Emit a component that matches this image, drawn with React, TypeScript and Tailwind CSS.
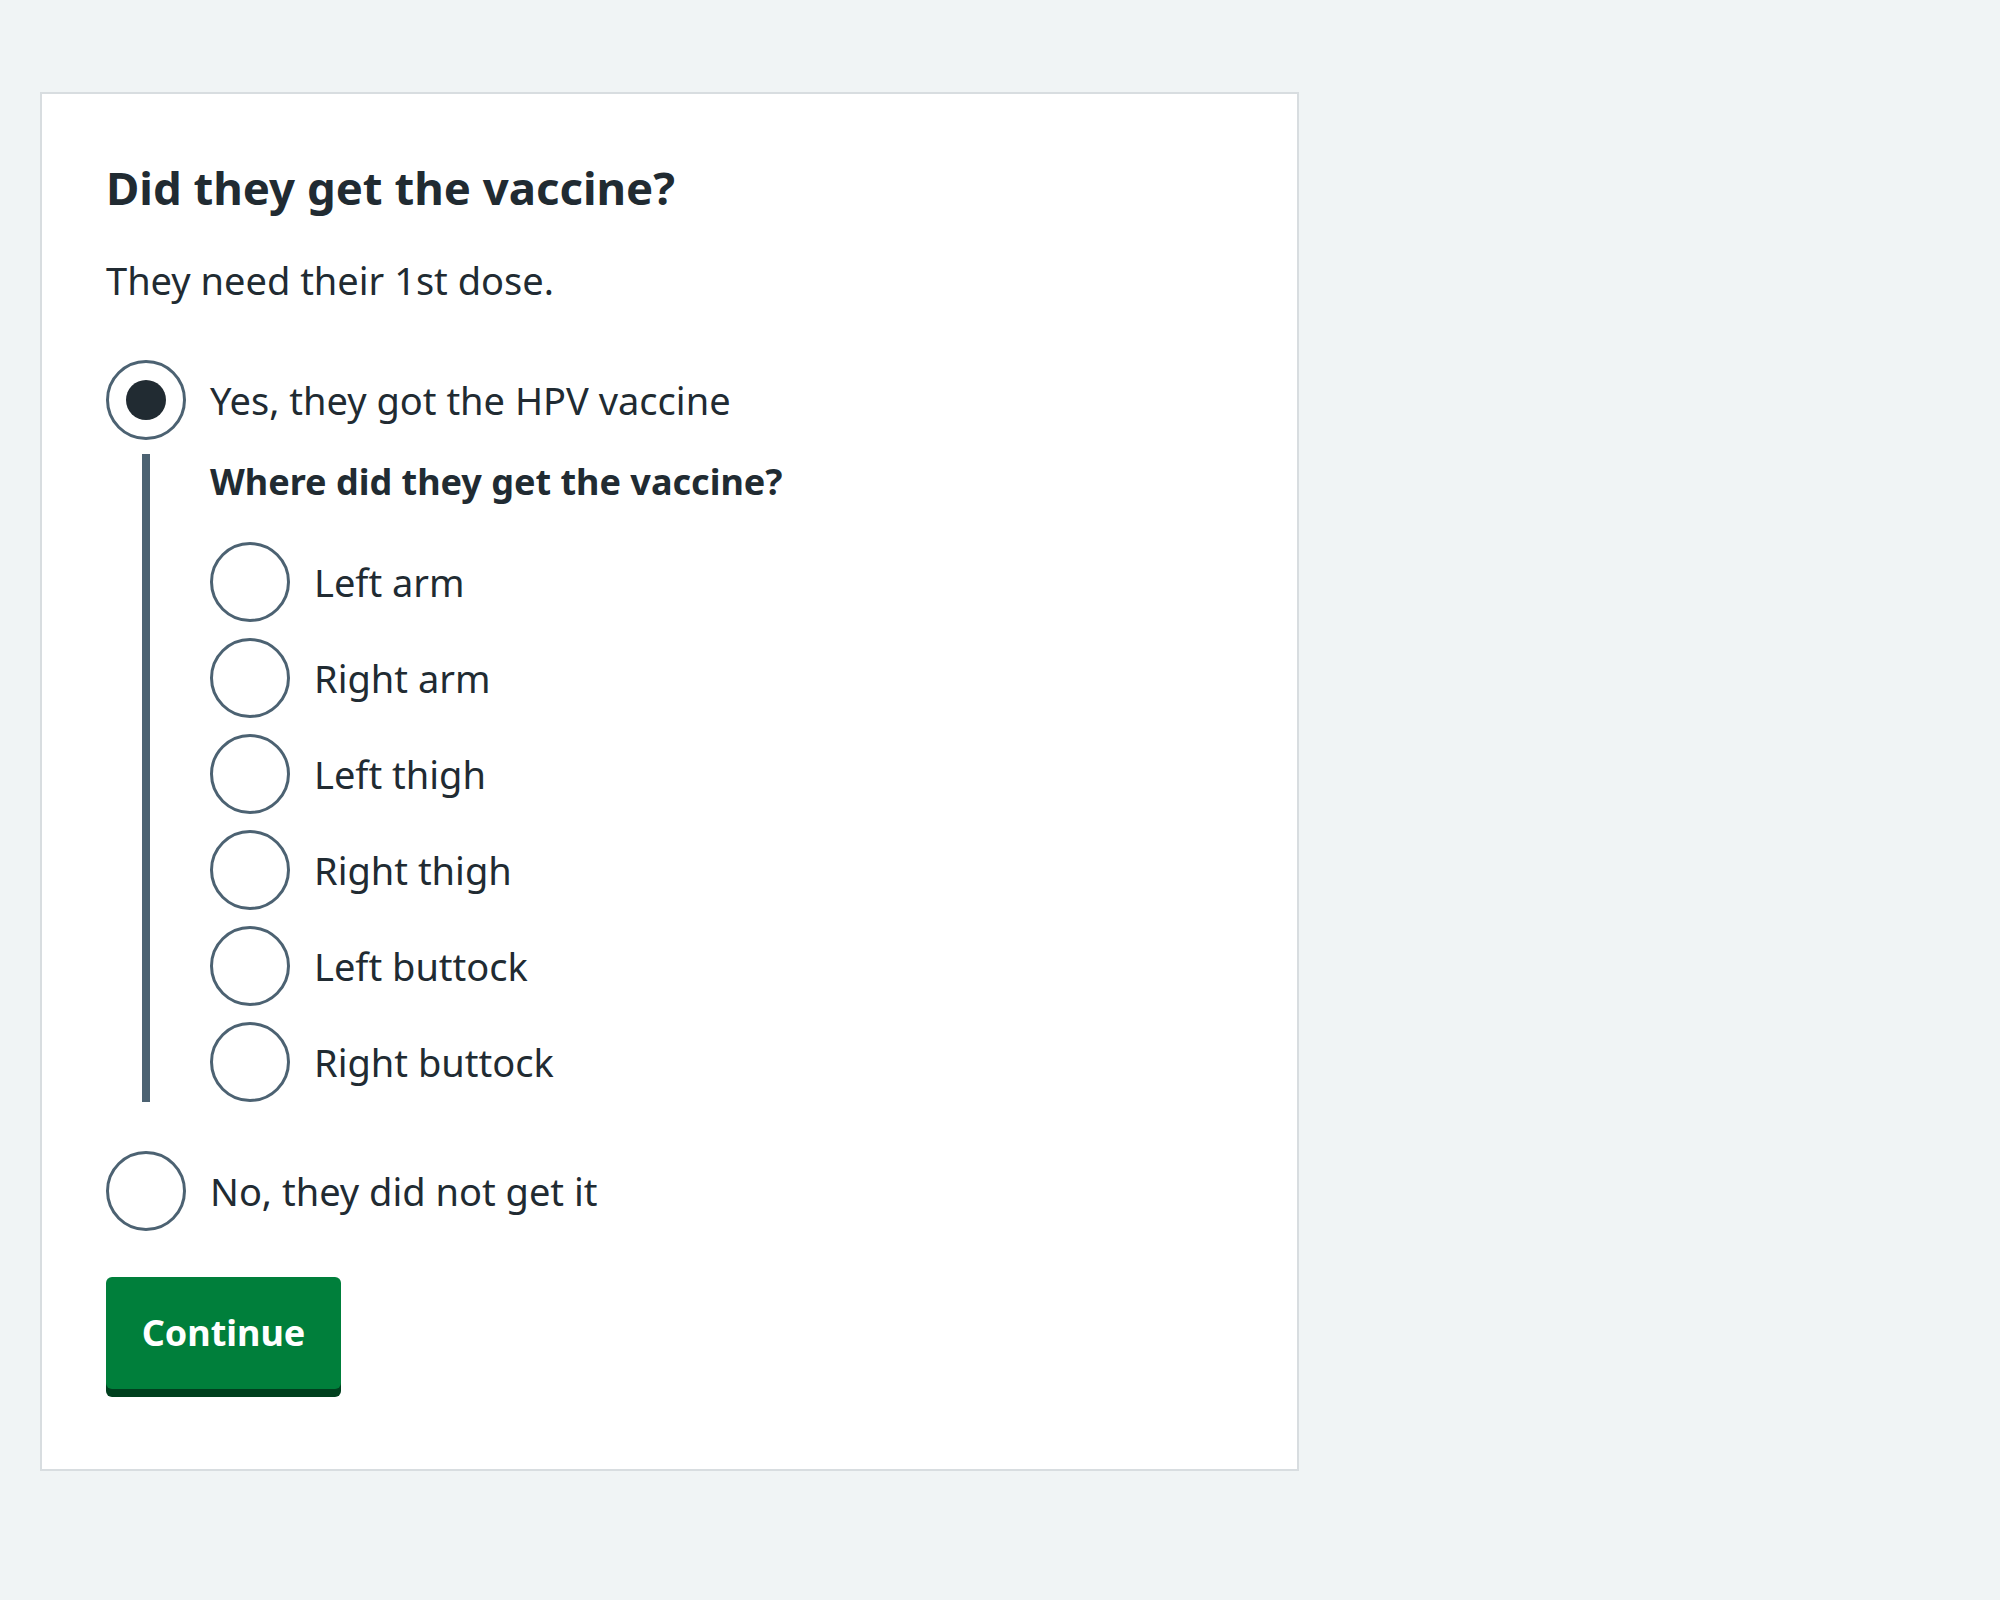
const font = { fontFamily: '"Noto Sans", "Open Sans", Arial, sans-serif' };

function Radio({ label, checked = false }: { label: string; checked?: boolean }) {
  return (
    <label className="flex items-center gap-[24px] h-[80px] cursor-pointer">
      <span className="w-[80px] h-[80px] shrink-0 rounded-full border-[3px] border-[#4c6272] bg-white flex items-center justify-center">
        {checked && <span className="w-[40px] h-[40px] rounded-full bg-[#212b32]" />}
      </span>
      <span className="text-[38px] leading-[56px] text-[#212b32]">{label}</span>
    </label>
  );
}

const sites = ["Left arm", "Right arm", "Left thigh", "Right thigh", "Left buttock", "Right buttock"];

export default function App() {
  return (
    <div className="min-h-screen bg-[#f0f4f5] pt-[92px] pl-[40px]" style={font}>
      <div className="w-[1259px] bg-white border-2 border-[#d8dde0] px-[64px] pt-[61px] pb-[80px] text-[#212b32]">
        <h2 className="text-[45.5px] leading-[64px] font-bold mb-[33px]">Did they get the vaccine?</h2>
        <p className="text-[38px] leading-[56px] mb-[52px]">They need their 1st dose.</p>

        <div className="flex flex-col">
          <Radio label="Yes, they got the HPV vaccine" checked />

          <div className="mt-[14px] ml-[36px] border-l-[8px] border-[#4c6272] pl-[60px]">
            <p className="text-[36px] leading-[56px] font-bold mb-[32px]">Where did they get the vaccine?</p>
            <div className="flex flex-col gap-[16px]">
              {sites.map((s) => (
                <Radio key={s} label={s} />
              ))}
            </div>
          </div>

          <div className="mt-[49px]">
            <Radio label="No, they did not get it" />
          </div>
        </div>

        <button className="mt-[46px] w-[235px] py-[28px] rounded-[6px] bg-[#007f3b] text-white text-[36px] leading-[56px] font-bold text-center shadow-[0_8px_0_#00401e]">
          Continue
        </button>
      </div>
    </div>
  );
}
